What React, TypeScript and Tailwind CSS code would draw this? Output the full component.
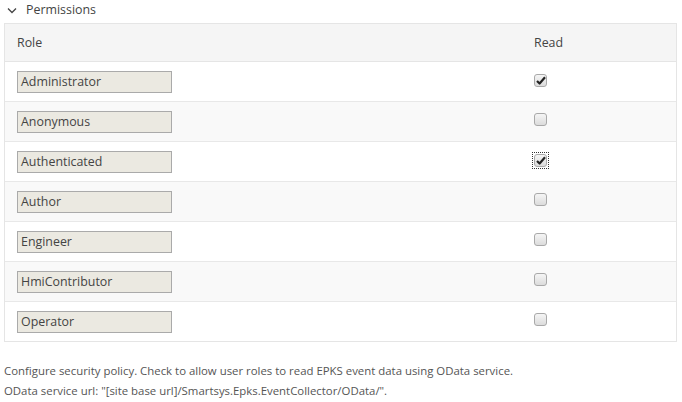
import React from 'react';

const roles = [
  { name: 'Administrator', read: true },
  { name: 'Anonymous', read: false },
  { name: 'Authenticated', read: true, focused: true },
  { name: 'Author', read: false },
  { name: 'Engineer', read: false },
  { name: 'HmiContributor', read: false },
  { name: 'Operator', read: false },
];

const Check: React.FC<{ checked: boolean; focused?: boolean }> = ({ checked, focused }) => (
  <span className={`inline-flex p-[1px] ${focused ? 'outline outline-1 outline-dotted outline-[#333]' : ''}`}>
    <span className="w-[13px] h-[13px] rounded-[3px] border border-[#a9a9a9] bg-gradient-to-b from-[#f5f5f5] to-[#dcdcdc] flex items-center justify-center">
      {checked && (
        <svg width="10" height="9" viewBox="0 0 10 9">
          <path d="M1 5 L3.6 7.5 L9 1.2" fill="none" stroke="#222" strokeWidth="2.2" strokeLinejoin="round" />
        </svg>
      )}
    </span>
  </span>
);

export default function App() {
  return (
    <div className="w-[682px] h-[402px] bg-white text-[#444] text-[12.4px]" style={{ fontFamily: '"Segoe UI", "Open Sans", sans-serif' }}>
      <div className="flex items-center h-[20px] pl-[7px] gap-[9px]">
        <svg width="10" height="7" viewBox="0 0 10 7">
          <path d="M1 1.5 L5 5.5 L9 1.5" fill="none" stroke="#444" strokeWidth="1.3" />
        </svg>
        <span className="text-[#444]">Permissions</span>
      </div>
      <div className="ml-[4px] mr-[5px] mt-[3px] border border-[#e5e5e5]">
        <div className="flex items-center h-[38px] pt-[2px] bg-[#f5f5f5] border-b border-[#e5e5e5]">
          <div className="w-[529px] pl-[12px]">Role</div>
          <div>Read</div>
        </div>
        {roles.map((r, i) => (
          <div key={r.name} className={`flex items-center ${i < roles.length - 1 ? 'h-[40px] border-b border-[#e8e8e8]' : 'h-[39px]'} ${i % 2 === 1 ? 'bg-[#f9f9f9]' : 'bg-white'}`}>
            <div className="w-[528px] pl-[12px]">
              <div className="w-[155px] h-[22px] pt-[1px] border border-[#aaa] bg-[#ebe9e1] pl-[3px] flex items-center">{r.name}</div>
            </div>
            <div>
              <Check checked={r.read} focused={r.focused} />
            </div>
          </div>
        ))}
      </div>
      <div className="mt-[19px] pl-[4px] text-[11.4px] leading-[20px] text-[#555]">
        <p>Configure security policy. Check to allow user roles to read EPKS event data using OData service.</p>
        <p>OData service url: "[site base url]/Smartsys.Epks.EventCollector/OData/".</p>
      </div>
    </div>
  );
}
